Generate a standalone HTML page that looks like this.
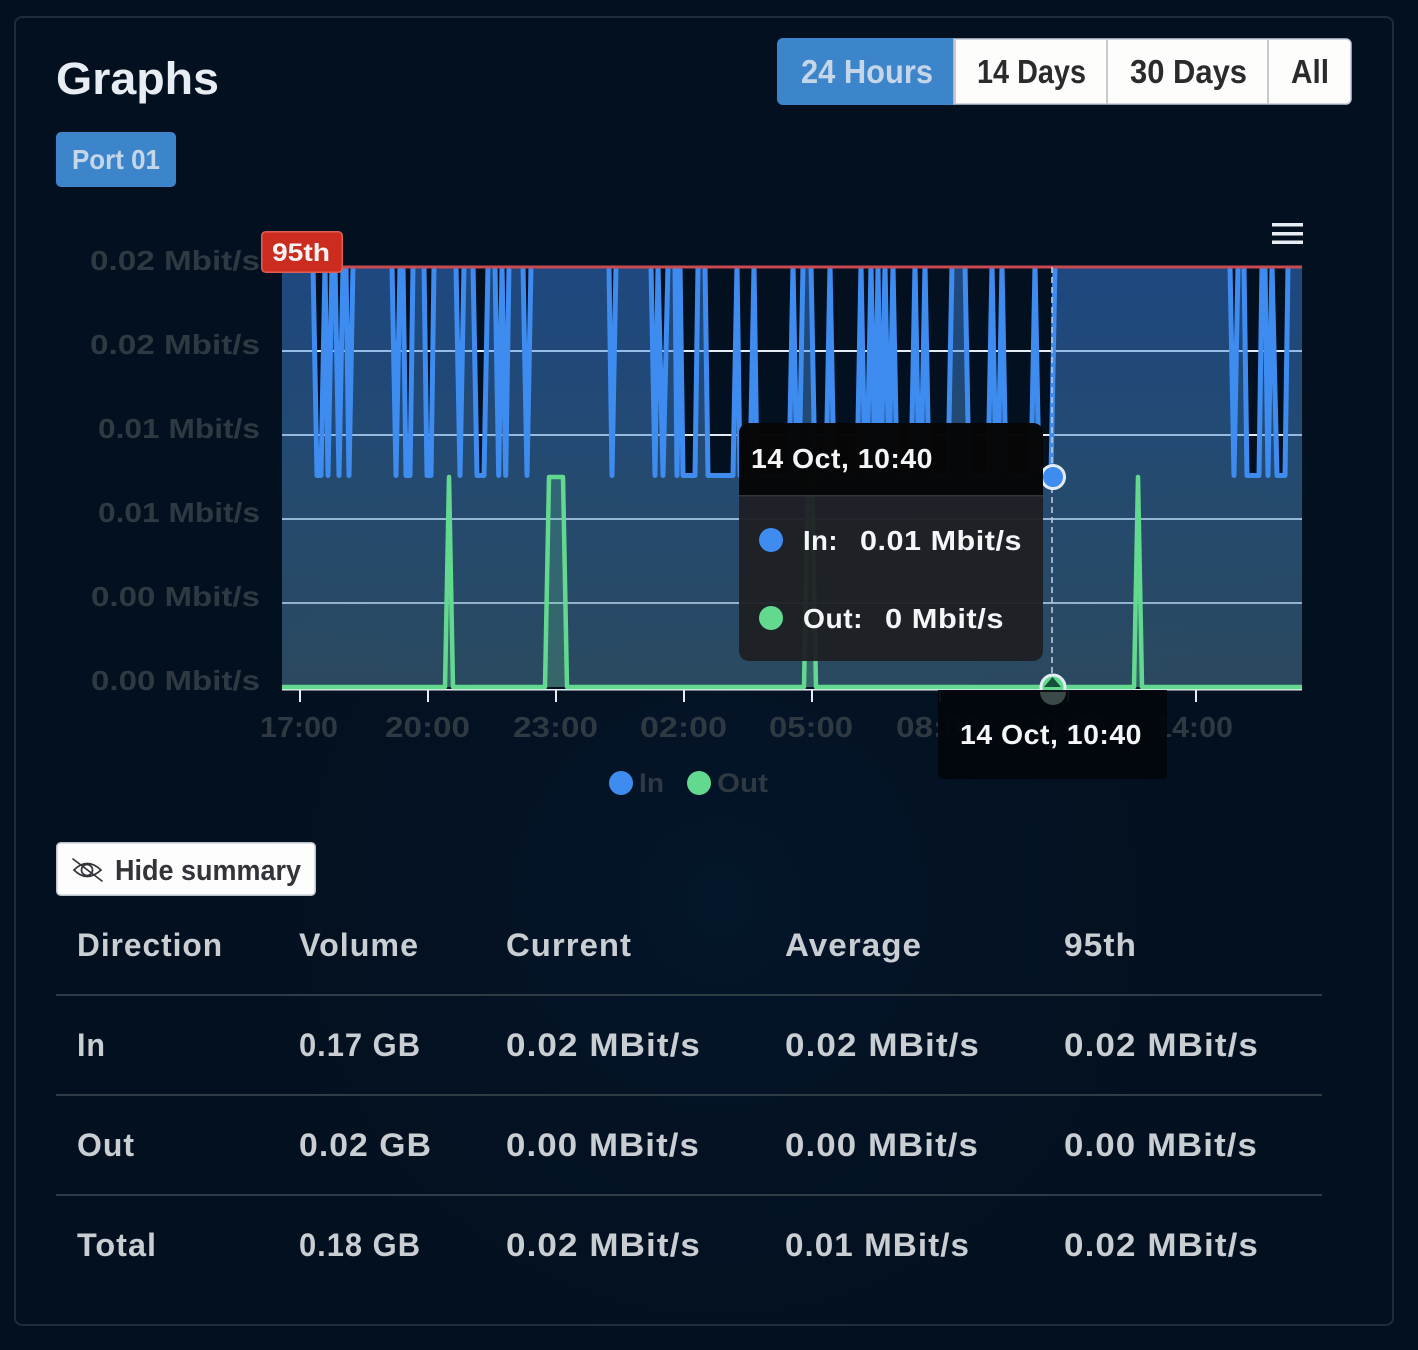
<!DOCTYPE html>
<html>
<head>
<meta charset="utf-8">
<title>Graphs</title>
<style>
html,body{margin:0;padding:0;background:#03101f;width:1418px;height:1350px;overflow:hidden}
svg{display:block}
text{font-family:"Liberation Sans",sans-serif;font-weight:700}
.y{font-size:28px;fill:#2e3942}
.x{font-size:29px;fill:#2e3942}
.t{font-size:32px;fill:#c9ced3;letter-spacing:1px}
.w{font-size:28px;fill:#f4f6f8;letter-spacing:.5px}
.b{font-size:33px;fill:#2b2b2d}
</style>
</head>
<body>
<svg width="1418" height="1350" viewBox="0 0 1418 1350" xmlns="http://www.w3.org/2000/svg">
<defs>
<radialGradient id="bg" gradientUnits="userSpaceOnUse" cx="720" cy="900" r="640">
<stop offset="0" stop-color="#06203f" stop-opacity=".38"/>
<stop offset="1" stop-color="#03101f" stop-opacity="0"/>
</radialGradient>
<linearGradient id="fillB" gradientUnits="userSpaceOnUse" x1="0" y1="267" x2="0" y2="687">
<stop offset="0" stop-color="#3d8af0" stop-opacity=".46"/>
<stop offset=".5" stop-color="#4584c0" stop-opacity=".5"/>
<stop offset="1" stop-color="#4c7994" stop-opacity=".54"/>
</linearGradient>
<clipPath id="plot"><rect x="282" y="265.500" width="1020" height="430"/></clipPath>
</defs>

<rect width="1418" height="1350" fill="#03101f"/>
<rect width="1418" height="1350" fill="url(#bg)"/>
<rect x="15" y="17" width="1378" height="1308" rx="7" fill="none" stroke="#1e2d3b" stroke-width="2"/>

<!-- Header -->
<text x="56" y="94" font-size="45" fill="#e8edf4" textLength="163" lengthAdjust="spacingAndGlyphs">Graphs</text>

<path d="M783 38H954V105H783a6 6 0 0 1-6-6V44a6 6 0 0 1 6-6z" fill="#3d85cb"/>
<path d="M954 39H1346a5 5 0 0 1 5 5V99a5 5 0 0 1-5 5H954z" fill="#fdfdfc" stroke="#c3ccd8" stroke-width="1.500"/>
<rect x="954" y="40" width="2" height="64" fill="#c6cacd"/>
<rect x="1106" y="40" width="2" height="64" fill="#c6cacd"/>
<rect x="1267" y="40" width="2" height="64" fill="#c6cacd"/>
<text x="801" y="83" class="b" style="fill:#c5d6e8" textLength="132" lengthAdjust="spacingAndGlyphs">24 Hours</text>
<text x="977" y="83" class="b" textLength="109" lengthAdjust="spacingAndGlyphs">14 Days</text>
<text x="1130" y="83" class="b" textLength="117" lengthAdjust="spacingAndGlyphs">30 Days</text>
<text x="1291" y="83" class="b" textLength="38" lengthAdjust="spacingAndGlyphs">All</text>

<rect x="56" y="132" width="120" height="55" rx="5" fill="#3d85cb"/>
<text x="72" y="169" font-size="28" fill="#c5d6e8" textLength="88" lengthAdjust="spacingAndGlyphs">Port 01</text>

<!-- Y labels -->
<text class="y" x="90" y="270" textLength="170" lengthAdjust="spacingAndGlyphs">0.02 Mbit/s</text>
<text class="y" x="90" y="354" textLength="170" lengthAdjust="spacingAndGlyphs">0.02 Mbit/s</text>
<text class="y" x="98" y="438" textLength="162" lengthAdjust="spacingAndGlyphs">0.01 Mbit/s</text>
<text class="y" x="98" y="522" textLength="162" lengthAdjust="spacingAndGlyphs">0.01 Mbit/s</text>
<text class="y" x="91" y="606" textLength="169" lengthAdjust="spacingAndGlyphs">0.00 Mbit/s</text>
<text class="y" x="91" y="690" textLength="169" lengthAdjust="spacingAndGlyphs">0.00 Mbit/s</text>

<!-- Grid -->
<g fill="#e6ecf3">
<rect x="282" y="350" width="1020" height="2"/>
<rect x="282" y="434" width="1020" height="2"/>
<rect x="282" y="518" width="1020" height="2"/>
<rect x="282" y="602" width="1020" height="2"/>
<rect x="282" y="689" width="1020" height="1.500"/>
<rect x="299" y="690" width="2" height="12"/>
<rect x="427" y="690" width="2" height="12"/>
<rect x="555" y="690" width="2" height="12"/>
<rect x="683" y="690" width="2" height="12"/>
<rect x="811" y="690" width="2" height="12"/>
<rect x="939" y="690" width="2" height="12"/>
<rect x="1067" y="690" width="2" height="12"/>
<rect x="1195" y="690" width="2" height="12"/>
</g>

<!-- In area -->
<path fill="url(#fillB)" d="M282 687V267H313L317 477H321L325 267L328 477L332 267H335L339 477L343 267H346L349 477L353 267H392L396 477L400 267H403L406 477H410L413 267H424L427 477H431L434 267H456L460 477L464 267H473L477 477H484L488 267H495L498.700 477L502 267L505.700 477L509 267H523L527 477L531 267H609L612 477L616 267H651L655 477L658 267L663 477L668 267H675L677 477L680 267L683 477H695L698 267H705L708 477H733L737 267L740 477H750L754 267L757 477H789L793 267L797 477H799L803 267H811L815 477H826L830 267L834 477H857L861 267L865 477H867L871 267L875 477L878 267L881 477L885 267L889 477L893 267L897 477H911L915 267L919 477H921L925 267L929 477H948L952 267H965L969 477H988L992 267L996 477H998L1002 267L1006 477H1031L1035 267L1039 477H1051L1055 267H1230L1234 477L1238 267H1244L1247 477H1259L1262 267H1265L1268 477L1272 267L1277 477H1285L1288 267H1302V687Z"/>
<!-- Out area -->
<path fill="#62d98f" fill-opacity=".2" d="M445 687L449 477L453 687ZM545 687L549 477H563L567 687ZM804 687L808 477H812L816 687ZM1134 687L1138 477L1142 687Z"/>

<!-- In line -->
<g clip-path="url(#plot)">
<path transform="translate(0,-1.500)" fill="none" stroke="#3f8cf0" stroke-width="5" stroke-linejoin="round" d="M282 267H313L317 477H321L325 267L328 477L332 267H335L339 477L343 267H346L349 477L353 267H392L396 477L400 267H403L406 477H410L413 267H424L427 477H431L434 267H456L460 477L464 267H473L477 477H484L488 267H495L498.700 477L502 267L505.700 477L509 267H523L527 477L531 267H609L612 477L616 267H651L655 477L658 267L663 477L668 267H675L677 477L680 267L683 477H695L698 267H705L708 477H733L737 267L740 477H750L754 267L757 477H789L793 267L797 477H799L803 267H811L815 477H826L830 267L834 477H857L861 267L865 477H867L871 267L875 477L878 267L881 477L885 267L889 477L893 267L897 477H911L915 267L919 477H921L925 267L929 477H948L952 267H965L969 477H988L992 267L996 477H998L1002 267L1006 477H1031L1035 267L1039 477H1051L1055 267H1230L1234 477L1238 267H1244L1247 477H1259L1262 267H1265L1268 477L1272 267L1277 477H1285L1288 267H1302"/>
</g>
<!-- Out line -->
<path fill="none" stroke="#62d98f" stroke-width="4.500" stroke-linejoin="round" d="M282 687H445L449 477L453 687H545L549 477H563L567 687H804L808 477H812L816 687H1134L1138 477L1142 687H1302"/>

<!-- 95th line -->
<rect x="282" y="265.500" width="1020" height="3" fill="#c94a50"/>
<rect x="261.750" y="231.750" width="80.500" height="40.500" rx="4" fill="#cc2b1f" stroke="#de5f55" stroke-width="1.500"/>
<text x="272" y="261" font-size="25" fill="#f7f4f2" textLength="58" lengthAdjust="spacingAndGlyphs">95th</text>

<!-- Hamburger -->
<g fill="#e8eef5">
<rect x="1272" y="223" width="31" height="3.500"/>
<rect x="1272" y="232" width="31" height="3.500"/>
<rect x="1272" y="240.500" width="31" height="3.500"/>
</g>

<!-- X labels -->
<text class="x" x="260" y="737" textLength="78" lengthAdjust="spacingAndGlyphs">17:00</text>
<text class="x" x="385" y="737" textLength="85" lengthAdjust="spacingAndGlyphs">20:00</text>
<text class="x" x="513" y="737" textLength="85" lengthAdjust="spacingAndGlyphs">23:00</text>
<text class="x" x="640" y="737" textLength="87" lengthAdjust="spacingAndGlyphs">02:00</text>
<text class="x" x="769" y="737" textLength="84" lengthAdjust="spacingAndGlyphs">05:00</text>
<text class="x" x="896" y="737" textLength="85" lengthAdjust="spacingAndGlyphs">08:00</text>
<text class="x" x="1031" y="737" textLength="75" lengthAdjust="spacingAndGlyphs">11:00</text>
<text class="x" x="1155" y="737" textLength="78" lengthAdjust="spacingAndGlyphs">14:00</text>

<!-- Legend -->
<circle cx="621" cy="783" r="12" fill="#3f8cf0"/>
<text class="x" x="639" y="792" style="font-size:27px" textLength="25" lengthAdjust="spacingAndGlyphs">In</text>
<circle cx="699" cy="783" r="12" fill="#62d98f"/>
<text class="x" x="717" y="792" style="font-size:27px" textLength="51" lengthAdjust="spacingAndGlyphs">Out</text>

<!-- Crosshair -->
<line x1="1052" y1="267" x2="1052" y2="687" stroke="#b9c9dc" stroke-width="1.600" stroke-dasharray="6 4"/>

<!-- Markers -->
<circle cx="1053" cy="477" r="11.500" fill="#3f8cf0" stroke="#e3ebf5" stroke-width="3"/>
<circle cx="1053" cy="687" r="12" fill="#62d98f" stroke="#e3ebf5" stroke-width="3"/>

<!-- Tooltip -->
<path d="M749 423H1033a10 10 0 0 1 10 10V651a10 10 0 0 1-10 10H749a10 10 0 0 1-10-10V433a10 10 0 0 1 10-10z" fill="#1e2024" fill-opacity=".95"/>
<path d="M749 423H1033a10 10 0 0 1 10 10V495H739V433a10 10 0 0 1 10-10z" fill="#000" fill-opacity=".78"/>
<rect x="739" y="495" width="304" height="1.500" fill="#33363b"/>
<text class="w" x="751" y="468" textLength="182" lengthAdjust="spacingAndGlyphs">14 Oct, 10:40</text>
<circle cx="771" cy="540" r="12" fill="#3f8cf0"/>
<text class="w" x="803" y="550" textLength="35" lengthAdjust="spacingAndGlyphs">In:</text>
<text class="w" x="860" y="550" textLength="162" lengthAdjust="spacingAndGlyphs">0.01 Mbit/s</text>
<circle cx="771" cy="618" r="12" fill="#62d98f"/>
<text class="w" x="803" y="628" textLength="60" lengthAdjust="spacingAndGlyphs">Out:</text>
<text class="w" x="885" y="628" textLength="119" lengthAdjust="spacingAndGlyphs">0 Mbit/s</text>

<!-- X tooltip -->
<path d="M938 690H1167V774a5 5 0 0 1-5 5H943a5 5 0 0 1-5-5z" fill="#02060d" fill-opacity=".95"/>
<path d="M1040 692a13 13 0 0 0 26 0z" fill="#3a4a48"/>
<path d="M1052.500 677L1061 687H1044z" fill="#14503a"/>
<text class="w" x="960" y="744" textLength="182" lengthAdjust="spacingAndGlyphs">14 Oct, 10:40</text>

<!-- Hide summary button -->
<rect x="56.750" y="842.750" width="258.500" height="52.500" rx="4" fill="#fdfdfe" stroke="#b9c1c9" stroke-width="1.500"/>
<g fill="none" stroke="#33343a" stroke-width="1.700" stroke-linecap="round">
<path d="M74 870Q87 857 101 870Q87 883 74 870Z"/>
<circle cx="87" cy="870" r="5.500"/>
<path d="M73 859L102 881"/>
</g>
<text x="115" y="880" font-size="29" fill="#33343a" textLength="186" lengthAdjust="spacingAndGlyphs">Hide summary</text>

<!-- Table -->
<g fill="#2f3c44">
<rect x="56" y="994" width="1266" height="2"/>
<rect x="56" y="1094" width="1266" height="2"/>
<rect x="56" y="1194" width="1266" height="2"/>
</g>
<text class="t" x="77" y="956" textLength="146" lengthAdjust="spacingAndGlyphs">Direction</text>
<text class="t" x="299" y="956" textLength="120" lengthAdjust="spacingAndGlyphs">Volume</text>
<text class="t" x="506" y="956" textLength="126" lengthAdjust="spacingAndGlyphs">Current</text>
<text class="t" x="785" y="956" textLength="137" lengthAdjust="spacingAndGlyphs">Average</text>
<text class="t" x="1064" y="956" textLength="73" lengthAdjust="spacingAndGlyphs">95th</text>

<text class="t" x="77" y="1056" textLength="29" lengthAdjust="spacingAndGlyphs">In</text>
<text class="t" x="299" y="1056" textLength="122" lengthAdjust="spacingAndGlyphs">0.17 GB</text>
<text class="t" x="506" y="1056" textLength="195" lengthAdjust="spacingAndGlyphs">0.02 MBit/s</text>
<text class="t" x="785" y="1056" textLength="195" lengthAdjust="spacingAndGlyphs">0.02 MBit/s</text>
<text class="t" x="1064" y="1056" textLength="195" lengthAdjust="spacingAndGlyphs">0.02 MBit/s</text>

<text class="t" x="77" y="1156" textLength="58" lengthAdjust="spacingAndGlyphs">Out</text>
<text class="t" x="299" y="1156" textLength="133" lengthAdjust="spacingAndGlyphs">0.02 GB</text>
<text class="t" x="506" y="1156" textLength="194" lengthAdjust="spacingAndGlyphs">0.00 MBit/s</text>
<text class="t" x="785" y="1156" textLength="194" lengthAdjust="spacingAndGlyphs">0.00 MBit/s</text>
<text class="t" x="1064" y="1156" textLength="194" lengthAdjust="spacingAndGlyphs">0.00 MBit/s</text>

<text class="t" x="77" y="1256" textLength="80" lengthAdjust="spacingAndGlyphs">Total</text>
<text class="t" x="299" y="1256" textLength="122" lengthAdjust="spacingAndGlyphs">0.18 GB</text>
<text class="t" x="506" y="1256" textLength="195" lengthAdjust="spacingAndGlyphs">0.02 MBit/s</text>
<text class="t" x="785" y="1256" textLength="185" lengthAdjust="spacingAndGlyphs">0.01 MBit/s</text>
<text class="t" x="1064" y="1256" textLength="195" lengthAdjust="spacingAndGlyphs">0.02 MBit/s</text>
</svg>
</body>
</html>
